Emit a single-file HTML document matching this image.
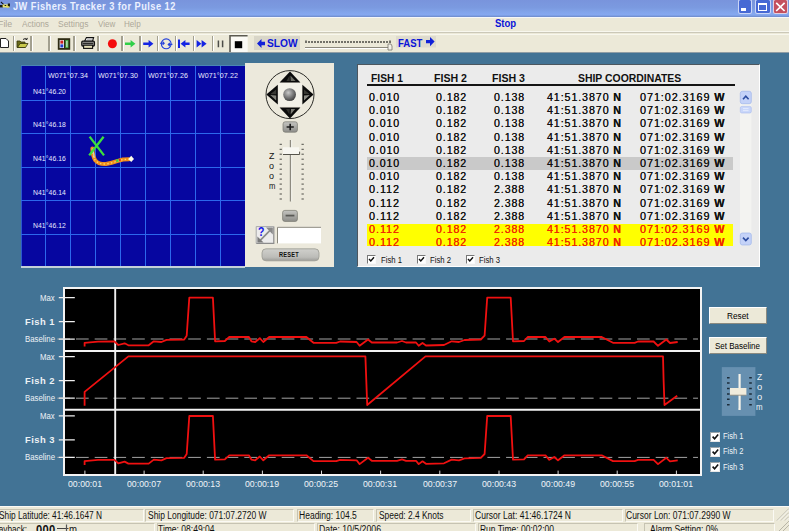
<!DOCTYPE html>
<html>
<head>
<meta charset="utf-8">
<title>JW Fishers Tracker 3 for Pulse 12</title>
<style>
html,body{margin:0;padding:0;}
body{width:789px;height:531px;overflow:hidden;position:relative;background:#427395;font-family:"Liberation Sans",sans-serif;font-size:11px;color:#000;}
.abs{position:absolute;}
.t{position:absolute;white-space:nowrap;line-height:1;}
#titlebar{left:0;top:0;width:789px;height:17px;background:linear-gradient(#7994dc 0%,#7b9ae0 45%,#82a4ea 70%,#85a8f0 86%,#7c9ce0 93%,#6b89c9 100%);}
#title{left:13.4px;top:2.1px;color:#ecf1ff;font-weight:bold;font-size:10px;letter-spacing:0.5px;}
.wb{position:absolute;top:-1px;height:15.4px;border:1px solid rgba(235,240,255,.8);border-radius:2.5px;box-sizing:border-box;}
#menubar{left:0;top:17px;width:789px;height:16px;background:#ece9d8;border-top:1px solid #f6f7f8;box-sizing:border-box;}
.menu{top:19.6px;color:#aca899;font-size:9.2px;}
#toolbar{left:0;top:31px;width:789px;height:21px;background:#ece9d8;border-top:1px solid #f8f7ee;box-sizing:border-box;}#tbline{left:0;top:32.3px;width:789px;height:1.2px;background:#cbc8b8;}#tbline2{left:0;top:33.5px;width:789px;height:1px;background:#f8f7ee;}
#tbshadow{left:0;top:52px;width:789px;height:1px;background:#8f9da5;}
.sep{position:absolute;top:36px;width:1.6px;height:15px;background:#a3a08f;border-right:1px solid #fff;}
.blue{color:#0a14d8;font-weight:bold;}
/* map */
#map{left:21px;top:65px;width:224px;height:202.6px;background:#0606a0;overflow:hidden;}
.vl{position:absolute;top:0;width:1.3px;height:203px;background:#2c68ec;}
.hl{position:absolute;left:0;height:1.3px;width:224px;background:#2c68ec;}
.ml{position:absolute;color:#e8ecff;font-size:7.5px;white-space:nowrap;line-height:1;letter-spacing:0.1px;}
#ctrl{left:245px;top:63.4px;width:88.7px;height:203.6px;background:#ece9dc;}
/* table */
#tbl{left:357px;top:64px;width:403px;height:203px;background:#ebebeb;box-sizing:border-box;border-top:1.8px solid #4c565e;border-left:1.8px solid #4c565e;border-right:1px solid #fff;border-bottom:1px solid #fff;}
.th{position:absolute;top:73.8px;font-weight:bold;font-size:10.3px;white-space:nowrap;line-height:1;color:#111;}
.row{position:absolute;left:367px;width:366px;height:13.2px;font-size:10.7px;line-height:13.2px;letter-spacing:0.9px;color:#111;white-space:nowrap;text-shadow:0 0 0.6px #222;}
.row span{position:absolute;top:0;}
.c1{left:2px}.c2{left:69px}.c3{left:127px}.c4{left:180px}.c5{left:273px}
.red{color:#f02800;text-shadow:0 0 0.6px #f02800;}
/* graph */
#graph{left:63px;top:287.3px;width:638.6px;height:188.5px;background:#000;box-sizing:border-box;border:2px solid #f4f4f4;}
.gl{position:absolute;color:#eef2f6;white-space:nowrap;line-height:1;text-align:right;}
.tm{position:absolute;top:478px;width:60px;text-align:center;color:#f0f4f8;font-size:11px;line-height:1;}
.btn{position:absolute;left:709px;width:58px;height:17px;background:#ece9d8;border:1px solid #fff;border-right-color:#8a8a80;border-bottom-color:#8a8a80;box-sizing:border-box;text-align:center;font-size:11px;line-height:15px;color:#000;}
.cb{position:absolute;width:10px;height:10px;background:#fff;border:1px solid #555;box-sizing:border-box;}
/* status */
#status{left:0;top:505.6px;width:789px;height:25.4px;background:#ece9d8;border-top:1.4px solid #fbfaf6;box-sizing:border-box;}
.sb{position:absolute;height:11.4px;border:1px solid #c6c3b2;border-right-color:#fbfaf4;border-bottom-color:#fbfaf4;box-sizing:border-box;}
.st{position:absolute;white-space:nowrap;line-height:1;font-size:10px;color:#111;}
</style>
</head>
<body>
<!-- TITLE BAR -->
<div id="titlebar" class="abs"></div>
<svg class="abs" style="left:0;top:0" width="12" height="10" viewBox="0 0 12 10"><path d="M0 5 H3 V7.4 H0 Z" fill="#1c1c10"/><path d="M1.2 1.6 L4.4 4.6 L3.4 5 L0.6 2.4 Z" fill="#141420"/><path d="M2.6 4.4 H8.2 V7.4 H2.6 Z" fill="#ece468"/><path d="M4.6 5 h1.6 v1 h-1.6 Z M7.8 3.6 H10 V6.8 H7.8 Z" fill="#1c1c10"/><path d="M6.6 6.2 H9.4 V7.6 H6.6 Z" fill="#e8dc50"/></svg>
<div id="title" class="t" style="transform-origin:0 0;transform:scaleX(0.9248)">JW Fishers Tracker 3 for Pulse 12</div>
<div class="wb" style="left:737.8px;width:14.6px;background:#4769d4;"><div class="abs" style="left:2px;top:8.2px;width:5.4px;height:2.6px;background:#fff"></div></div>
<div class="wb" style="left:755px;width:15.6px;background:#4769d4;"><div class="abs" style="left:2.2px;top:2.8px;width:9px;height:8px;border:1.2px solid #fff;border-top-width:2.4px;box-sizing:border-box"></div></div>
<div class="wb" style="left:773px;width:15.2px;background:#c4505e;"><svg class="abs" style="left:1.4px;top:2.4px" width="11" height="10" viewBox="0 0 11 10"><path d="M1.2 0.8 L9.6 9 M9.6 0.8 L1.2 9" stroke="#fff" stroke-width="1.7"/></svg></div>
<!-- MENU -->
<div id="menubar" class="abs"></div>
<div class="t menu" style="left:-2px;transform-origin:0 0;transform:scaleX(0.9586)">File</div>
<div class="t menu" style="left:22px;transform-origin:0 0;transform:scaleX(0.8958)">Actions</div>
<div class="t menu" style="left:58px;transform-origin:0 0;transform:scaleX(0.9186)">Settings</div>
<div class="t menu" style="left:98px;transform-origin:0 0;transform:scaleX(0.8759)">View</div>
<div class="t menu" style="left:124px;transform-origin:0 0;transform:scaleX(0.8833)">Help</div>
<div class="t blue" style="left:495.2px;top:19.2px;font-size:10.2px;transform-origin:0 0;transform:scaleX(0.9364)">Stop</div>
<!-- TOOLBAR -->
<div id="toolbar" class="abs"></div>
<div id="tbshadow" class="abs"></div><div id="tbline" class="abs"></div><div id="tbline2" class="abs"></div>
<div class="sep" style="left:12.6px"></div><div class="sep" style="left:30.2px"></div><div class="sep" style="left:48.2px"></div><div class="sep" style="left:73px"></div><div class="sep" style="left:97px"></div><div class="sep" style="left:121.3px"></div><div class="sep" style="left:139px"></div><div class="sep" style="left:156.6px"></div><div class="sep" style="left:174.6px"></div><div class="sep" style="left:192.7px"></div><div class="sep" style="left:211.6px"></div>
<svg class="abs" style="left:0;top:34px" width="440" height="18" viewBox="0 34 440 18">
<!-- new doc -->
<path d="M0.5 38.5 H6 L8.5 41 V47.5 H0.5 Z" fill="#fff" stroke="#222" stroke-width="1"/>
<!-- open folder -->
<path d="M17 47.5 V41 H20 L21 42 H25 V47.5 Z" fill="#6b6b1a" stroke="#33330a" stroke-width="0.8"/><path d="M17.5 47.5 L20 43.5 H28 L25.5 47.5 Z" fill="#c8c84a" stroke="#33330a" stroke-width="0.8"/><path d="M23 39.5 Q25.5 37.5 27 39.5 M27 39.5 l0.3 -1.6 M27 39.5 l-1.6 -0.2" stroke="#111" stroke-width="0.9" fill="none"/>
<!-- picture icon -->
<rect x="57.8" y="38.2" width="12.4" height="11.6" fill="#2e2c14"/><rect x="59.6" y="40" width="4.4" height="8" fill="#e8e8f0"/><rect x="60.4" y="40.6" width="2.8" height="3" fill="#d02020"/><rect x="60.4" y="44.4" width="2.8" height="3" fill="#2040d0"/><rect x="65.4" y="40" width="3" height="8" fill="#48b048"/><rect x="66.4" y="41" width="1" height="6" fill="#e8f0e8"/>
<!-- printer -->
<path d="M84.4 41.4 L86.4 37.6 H93.6 L92.4 41.4 Z" fill="#f8f8f8" stroke="#111" stroke-width="1.1"/><path d="M87 39.4 h5" stroke="#999" stroke-width="0.6"/><rect x="81.8" y="41.2" width="12.6" height="4.8" rx="1" fill="#9a9a96" stroke="#111" stroke-width="1.3"/><rect x="83.6" y="45.2" width="9" height="3.2" fill="#e4e0b8" stroke="#111" stroke-width="1.1"/><rect x="83" y="42.8" width="10" height="1.2" fill="#2a2a2a"/>
<!-- record -->
<circle cx="112.4" cy="43.8" r="4.5" fill="#f40c0c"/>
<!-- green arrow -->
<path d="M125 42.6 H130.6 V40 L135.4 43.8 L130.6 47.6 V45 H125 Z" fill="#30d048"/>
<!-- blue arrow -->
<path d="M143.2 42.6 H148.6 V40 L153.4 43.8 L148.6 47.6 V45 H143.2 Z" fill="#1424e4"/>
<!-- cycle -->
<circle cx="166.2" cy="43.8" r="4.9" fill="none" stroke="#2440dc" stroke-width="1.1"/><path d="M160 43.2 H163.6 M162.6 41.6 L164.2 43.2 L162.6 44.8 M172.4 44.4 H168.8 M169.8 42.8 L168.2 44.4 L169.8 46" stroke="#2440dc" stroke-width="1.1" fill="none"/>
<!-- |<- -->
<path d="M179 39.6 V48" stroke="#1424e4" stroke-width="2"/><path d="M189.6 42.6 H185.4 V40 L180.6 43.8 L185.4 47.6 V45 H189.6 Z" fill="#1424e4"/>
<!-- >> -->
<path d="M196.6 40 L201.4 43.8 L196.6 47.6 Z M201.6 40 L206.6 43.8 L201.6 47.6 Z" fill="#1424e4"/>
<!-- pause -->
<path d="M218.4 40.5 V47.3 M222.6 40.5 V47.3" stroke="#4c4c48" stroke-width="1.5"/>
<!-- stop (pressed) -->
<rect x="229.3" y="35" width="18.4" height="17" fill="#fbfaf5"/><path d="M230 52 V35.8 H247.6" stroke="#5c5a50" stroke-width="1.6" fill="none"/><rect x="234.8" y="41.2" width="7.4" height="7" fill="#000"/>
<!-- slow bg -->
<rect x="254" y="36" width="46" height="14" fill="#d9d6c8"/>
<path d="M257 43.5 L261.5 39 V41.8 H265 V45.2 H261.5 V48 Z" fill="#1020d8"/>
<!-- slider -->
<path d="M306 40.5 V43 M309 41 V43 M312 41 V43 M315 41 V43 M318 41 V43 M321 41 V43 M324 41 V43 M327 41 V43 M330 41 V43 M333 41 V43 M336 41 V43 M339 41 V43 M342 41 V43 M345 41 V43 M348 41 V43 M351 41 V43 M354 41 V43 M357 41 V43 M360 41 V43 M363 41 V43 M366 41 V43 M369 41 V43 M372 41 V43 M375 41 V43 M378 41 V43 M381 41 V43 M384 41 V43 M387 41 V43 M390 40.5 V43" stroke="#2a2a26" stroke-width="1.25"/>
<path d="M305 47.5 H388" stroke="#8c897c" stroke-width="1"/><path d="M305 48.5 H388" stroke="#fff" stroke-width="1"/>
<path d="M388 44 H391 L392 46 V50 H388 Z" fill="#f4f2ea" stroke="#77746a" stroke-width="0.8"/>
<!-- fast arrow -->
<rect x="396" y="36" width="40" height="11.5" fill="#dedbce"/><path d="M434.6 41.6 L430 37 V39.9 H426 V43.3 H430 V46.2 Z" fill="#1020d8"/>
</svg>
<div class="t blue" style="left:267px;top:38.2px;font-size:10.6px;transform-origin:0 0;transform:scaleX(0.9628)">SLOW</div>
<div class="t blue" style="left:397.8px;top:37.6px;font-size:10.8px;transform-origin:0 0;transform:scaleX(0.8843)">FAST</div>
<!-- MAP -->
<div id="map" class="abs">
<div class="vl" style="left:0;background:#2a58d0"></div><div class="vl" style="left:23.8px"></div><div class="vl" style="left:48.8px"></div><div class="vl" style="left:73.8px"></div><div class="vl" style="left:98.9px"></div><div class="vl" style="left:123.9px"></div><div class="vl" style="left:149.0px"></div><div class="vl" style="left:174.0px"></div><div class="vl" style="left:199.1px"></div>
<div class="hl" style="top:-0.4px;height:1.4px;background:#4a86b4"></div><div class="hl" style="top:201.3px;height:1.3px;background:#c4d0d8"></div><div class="hl" style="top:34.6px"></div><div class="hl" style="top:68.1px"></div><div class="hl" style="top:101.6px"></div><div class="hl" style="top:135.1px"></div><div class="hl" style="top:168.6px"></div>
<div class="ml" style="left:26.5px;top:7px;transform-origin:0 0;transform:scaleX(0.9440)">W071°07.34</div><div class="ml" style="left:76.6px;top:7px;transform-origin:0 0;transform:scaleX(0.9440)">W071°07.30</div><div class="ml" style="left:126.7px;top:7px;transform-origin:0 0;transform:scaleX(0.9440)">W071°07.26</div><div class="ml" style="left:176.8px;top:7px;transform-origin:0 0;transform:scaleX(0.9440)">W071°07.22</div><div class="ml" style="left:11.5px;top:22.7px;transform-origin:0 0;transform:scaleX(0.9057)">N41°46.20</div><div class="ml" style="left:11.5px;top:56.3px;transform-origin:0 0;transform:scaleX(0.9057)">N41°46.18</div><div class="ml" style="left:11.5px;top:89.9px;transform-origin:0 0;transform:scaleX(0.9057)">N41°46.16</div><div class="ml" style="left:11.5px;top:123.5px;transform-origin:0 0;transform:scaleX(0.9057)">N41°46.14</div><div class="ml" style="left:11.5px;top:157.1px;transform-origin:0 0;transform:scaleX(0.9057)">N41°46.12</div>
<svg class="abs" style="left:0;top:0" width="224" height="203" viewBox="21 65 224 203">
<path d="M92.4 148.5 Q92.6 156 95.2 160.2 Q99 164.6 106 164 Q112 163 117 161.2 L123 159.5 L129 159.3" stroke="#f08c1c" stroke-width="4" fill="none" stroke-linecap="round" stroke-linejoin="round"/>
<path d="M92.4 148.5 Q92.6 156 95.2 160.2 Q99 164.6 106 164 Q112 163 117 161.2 L123 159.5 L129 159.3" stroke="#f8d868" stroke-width="1.4" fill="none" stroke-dasharray="1.4 2.2"/>
<path d="M93.2 151 L94.2 158" stroke="#d8d0c0" stroke-width="1.2"/>
<rect x="116.2" y="159.2" width="2.4" height="2.6" fill="#40d040"/><rect x="119" y="159" width="1.6" height="2" fill="#e82020"/>
<path d="M89.6 136.6 L104 155.4 M103.6 136.8 L89.2 155.4" stroke="#3ce03c" stroke-width="2.3" fill="none"/>
<path d="M131.2 155.8 L134 158.9 L131.2 162 L128.4 158.9 Z" fill="#fffde8"/>
</svg>
</div>
<div id="ctrl" class="abs"></div>
<svg class="abs" style="left:245px;top:64px" width="88" height="203" viewBox="245 64 88 203">
<defs>
<radialGradient id="ball" cx="0.4" cy="0.35" r="0.7"><stop offset="0" stop-color="#c8c8c8"/><stop offset="0.5" stop-color="#808080"/><stop offset="1" stop-color="#3a3a3a"/></radialGradient>
<linearGradient id="bt" x1="0" y1="0" x2="0" y2="1"><stop offset="0" stop-color="#c4c4c0"/><stop offset="1" stop-color="#8e8e8a"/></linearGradient><linearGradient id="rs" x1="0" y1="0" x2="0" y2="1"><stop offset="0" stop-color="#d0d0cc"/><stop offset="0.7" stop-color="#bcbcb8"/><stop offset="1" stop-color="#9c9c98"/></linearGradient>
</defs>
<circle cx="290" cy="94.6" r="24" fill="none" stroke="#2c2c28" stroke-width="1"/>
<rect x="278.4" y="83" width="23.4" height="23.6" fill="#f3f1e8"/>
<path d="M290 71.6 L300.4 82.6 H279.6 Z" fill="#0a0a0a"/><path d="M290.4 75.4 L295.6 81 H290.8 Z" fill="#6e6e66"/><path d="M289.6 75.6 L289.8 81 H286.4 Z" fill="#34342f"/>
<path d="M290 118.4 L300.4 107.4 H279.6 Z" fill="#0a0a0a"/><path d="M290.6 114.6 L295.2 109 H291 Z" fill="#7c7c74"/><path d="M289.4 114.4 L289.8 109 H286 Z" fill="#30302c"/>
<path d="M266.3 94.6 L277.8 84.8 V104.6 Z" fill="#0a0a0a"/><path d="M270.2 95 L276.2 95.4 V100.4 Z" fill="#82827a"/><path d="M270.2 94.2 L276.2 94.2 V89.4 Z" fill="#3a3a35"/>
<path d="M313.6 94.6 L302.4 84.8 V104.6 Z" fill="#0a0a0a"/><path d="M309.8 95 L304 95.6 V100.6 Z" fill="#8c8c84"/><path d="M309.8 94.2 L304 94 V89.4 Z" fill="#383833"/>
<circle cx="289.6" cy="94.6" r="6.4" fill="url(#ball)"/>
<!-- plus -->
<rect x="283" y="121.8" width="14.4" height="10.4" rx="2.2" fill="url(#bt)" stroke="#77776f" stroke-width="0.7"/><path d="M286.6 127 H293.8 M290.2 123.8 V130.2" stroke="#1c1c1c" stroke-width="1.6"/>
<!-- slider -->
<path d="M290.5 140 V201.5" stroke="#8e8b80" stroke-width="1.4"/><path d="M291.7 140 V201.5" stroke="#fbfbf6" stroke-width="0.8"/>
<path d="M279.6 144.3 h2.3 M301.5 144.3 h2.3 M279.6 149.3 h2.3 M301.5 149.3 h2.3 M279.6 154.2 h2.3 M301.5 154.2 h2.3 M279.6 159.2 h2.3 M301.5 159.2 h2.3 M279.6 164.2 h2.3 M301.5 164.2 h2.3 M279.6 169.2 h2.3 M301.5 169.2 h2.3 M279.6 174.1 h2.3 M301.5 174.1 h2.3 M279.6 179.1 h2.3 M301.5 179.1 h2.3 M279.6 184.1 h2.3 M301.5 184.1 h2.3 M279.6 189.0 h2.3 M301.5 189.0 h2.3 M279.6 194.0 h2.3 M301.5 194.0 h2.3 M279.6 199.0 h2.3 M301.5 199.0 h2.3" stroke="#46463f" stroke-width="0.95"/>
<path d="M283 147.2 H299.2 V150 L300.8 151 L299.2 152 V154.4 H283 Z" fill="#f8f7f1"/><path d="M283 154.5 H299.6 V151.6" stroke="#55534a" stroke-width="1" fill="none"/>
<!-- minus -->
<rect x="282.6" y="210.4" width="14.8" height="11" rx="2.2" fill="url(#bt)" stroke="#77776f" stroke-width="0.7"/><path d="M285.6 215.6 H294.4" stroke="#5a5a56" stroke-width="1.8"/>
<!-- help icon -->
<rect x="256.2" y="226.6" width="17.6" height="16.8" fill="#ececec"/><path d="M256.2 243.4 H273.8 V226.6" stroke="#8c8c8c" stroke-width="1.2" fill="none"/><path d="M256.2 243.4 V226.6 H273.8" stroke="#a8a8a8" stroke-width="1" fill="none"/>
<path d="M259 241.6 L272 228.4" stroke="#8a8a8a" stroke-width="1.6"/><path d="M272.8 227.6 V234.5 L266 227.6 Z" fill="#8a8a8a"/><path d="M257.4 242.6 V236.4 L263.6 242.6 Z" fill="#7a7a7a"/>
<!-- input -->
<rect x="277" y="226.8" width="44" height="16.6" fill="#fff"/><path d="M277.5 243.4 V227.3 H321" stroke="#8a887c" stroke-width="1" fill="none"/>
<!-- reset -->
<rect x="262" y="248.8" width="57" height="12" rx="4" fill="url(#rs)" stroke="#9a9a92" stroke-width="0.8"/>
</svg>
<div class="t" style="left:257.6px;top:226px;font-size:12px;font-weight:bold;color:#1414e8;transform-origin:0 0;transform:scaleX(0.8715)">?</div>
<div class="t" style="left:268.8px;top:151px;font-size:9.5px;color:#111;transform-origin:0 0;transform:scaleX(0.9290)">Z</div>
<div class="t" style="left:269px;top:160.7px;font-size:9.5px;color:#111;transform-origin:0 0;transform:scaleX(0.9440)">o</div>
<div class="t" style="left:269px;top:170.9px;font-size:9.5px;color:#111;transform-origin:0 0;transform:scaleX(0.9440)">o</div>
<div class="t" style="left:268.5px;top:181px;font-size:9.5px;color:#111;transform-origin:0 0;transform:scaleX(0.8079)">m</div>
<div class="t" style="left:279.1px;top:250.6px;font-size:8px;font-weight:bold;color:#111;letter-spacing:0.3px;transform-origin:0 0;transform:scaleX(0.7028)">RESET</div>
<!-- TABLE -->
<div id="tbl" class="abs"></div>
<div class="th" style="left:370.7px;transform-origin:0 0;transform:scaleX(0.9985)">FISH 1</div><div class="th" style="left:434px;transform-origin:0 0;transform:scaleX(1.0297)">FISH 2</div><div class="th" style="left:492px;transform-origin:0 0;transform:scaleX(1.0297)">FISH 3</div><div class="th" style="left:577.5px;transform-origin:0 0;transform:scaleX(1.0115)">SHIP COORDINATES</div>
<div class="abs" style="left:367px;top:83.9px;width:368px;height:2.3px;background:#141414"></div>
<div class="abs" style="left:367px;top:157.2px;width:366px;height:12.8px;background:#c9c9c9"></div>
<div class="abs" style="left:367px;top:223.6px;width:366px;height:22px;background:#ffff00"></div>
<div class="abs" style="left:367px;top:91px;width:366px;height:154.6px;overflow:hidden">
<div class="row" style="left:0;top:0.0px"><span class="c1" style="transform-origin:0 0;transform:scaleX(0.9920)">0.010</span><span class="c2" style="transform-origin:0 0;transform:scaleX(0.9920)">0.182</span><span class="c3" style="transform-origin:0 0;transform:scaleX(0.9920)">0.138</span><span class="c4" style="transform-origin:0 0;transform:scaleX(1.0002)">41:51.3870 <b>N</b></span><span class="c5" style="transform-origin:0 0;transform:scaleX(1.0154)">071:02.3169 <b>W</b></span></div>
<div class="row" style="left:0;top:13.2px"><span class="c1" style="transform-origin:0 0;transform:scaleX(0.9920)">0.010</span><span class="c2" style="transform-origin:0 0;transform:scaleX(0.9920)">0.182</span><span class="c3" style="transform-origin:0 0;transform:scaleX(0.9920)">0.138</span><span class="c4" style="transform-origin:0 0;transform:scaleX(1.0002)">41:51.3870 <b>N</b></span><span class="c5" style="transform-origin:0 0;transform:scaleX(1.0154)">071:02.3169 <b>W</b></span></div>
<div class="row" style="left:0;top:26.4px"><span class="c1" style="transform-origin:0 0;transform:scaleX(0.9920)">0.010</span><span class="c2" style="transform-origin:0 0;transform:scaleX(0.9920)">0.182</span><span class="c3" style="transform-origin:0 0;transform:scaleX(0.9920)">0.138</span><span class="c4" style="transform-origin:0 0;transform:scaleX(1.0002)">41:51.3870 <b>N</b></span><span class="c5" style="transform-origin:0 0;transform:scaleX(1.0154)">071:02.3169 <b>W</b></span></div>
<div class="row" style="left:0;top:39.6px"><span class="c1" style="transform-origin:0 0;transform:scaleX(0.9920)">0.010</span><span class="c2" style="transform-origin:0 0;transform:scaleX(0.9920)">0.182</span><span class="c3" style="transform-origin:0 0;transform:scaleX(0.9920)">0.138</span><span class="c4" style="transform-origin:0 0;transform:scaleX(1.0002)">41:51.3870 <b>N</b></span><span class="c5" style="transform-origin:0 0;transform:scaleX(1.0154)">071:02.3169 <b>W</b></span></div>
<div class="row" style="left:0;top:52.8px"><span class="c1" style="transform-origin:0 0;transform:scaleX(0.9920)">0.010</span><span class="c2" style="transform-origin:0 0;transform:scaleX(0.9920)">0.182</span><span class="c3" style="transform-origin:0 0;transform:scaleX(0.9920)">0.138</span><span class="c4" style="transform-origin:0 0;transform:scaleX(1.0002)">41:51.3870 <b>N</b></span><span class="c5" style="transform-origin:0 0;transform:scaleX(1.0154)">071:02.3169 <b>W</b></span></div>
<div class="row" style="left:0;top:66.0px"><span class="c1" style="transform-origin:0 0;transform:scaleX(0.9920)">0.010</span><span class="c2" style="transform-origin:0 0;transform:scaleX(0.9920)">0.182</span><span class="c3" style="transform-origin:0 0;transform:scaleX(0.9920)">0.138</span><span class="c4" style="transform-origin:0 0;transform:scaleX(1.0002)">41:51.3870 <b>N</b></span><span class="c5" style="transform-origin:0 0;transform:scaleX(1.0154)">071:02.3169 <b>W</b></span></div>
<div class="row" style="left:0;top:79.2px"><span class="c1" style="transform-origin:0 0;transform:scaleX(0.9920)">0.010</span><span class="c2" style="transform-origin:0 0;transform:scaleX(0.9920)">0.182</span><span class="c3" style="transform-origin:0 0;transform:scaleX(0.9920)">0.138</span><span class="c4" style="transform-origin:0 0;transform:scaleX(1.0002)">41:51.3870 <b>N</b></span><span class="c5" style="transform-origin:0 0;transform:scaleX(1.0154)">071:02.3169 <b>W</b></span></div>
<div class="row" style="left:0;top:92.4px"><span class="c1" style="transform-origin:0 0;transform:scaleX(1.0180)">0.112</span><span class="c2" style="transform-origin:0 0;transform:scaleX(0.9920)">0.182</span><span class="c3" style="transform-origin:0 0;transform:scaleX(0.9920)">2.388</span><span class="c4" style="transform-origin:0 0;transform:scaleX(1.0002)">41:51.3870 <b>N</b></span><span class="c5" style="transform-origin:0 0;transform:scaleX(1.0154)">071:02.3169 <b>W</b></span></div>
<div class="row" style="left:0;top:105.6px"><span class="c1" style="transform-origin:0 0;transform:scaleX(1.0180)">0.112</span><span class="c2" style="transform-origin:0 0;transform:scaleX(0.9920)">0.182</span><span class="c3" style="transform-origin:0 0;transform:scaleX(0.9920)">2.388</span><span class="c4" style="transform-origin:0 0;transform:scaleX(1.0002)">41:51.3870 <b>N</b></span><span class="c5" style="transform-origin:0 0;transform:scaleX(1.0154)">071:02.3169 <b>W</b></span></div>
<div class="row" style="left:0;top:118.8px"><span class="c1" style="transform-origin:0 0;transform:scaleX(1.0180)">0.112</span><span class="c2" style="transform-origin:0 0;transform:scaleX(0.9920)">0.182</span><span class="c3" style="transform-origin:0 0;transform:scaleX(0.9920)">2.388</span><span class="c4" style="transform-origin:0 0;transform:scaleX(1.0002)">41:51.3870 <b>N</b></span><span class="c5" style="transform-origin:0 0;transform:scaleX(1.0154)">071:02.3169 <b>W</b></span></div>
<div class="row red" style="left:0;top:132.0px"><span class="c1" style="transform-origin:0 0;transform:scaleX(1.0180)">0.112</span><span class="c2" style="transform-origin:0 0;transform:scaleX(0.9920)">0.182</span><span class="c3" style="transform-origin:0 0;transform:scaleX(0.9920)">2.388</span><span class="c4" style="transform-origin:0 0;transform:scaleX(1.0002)">41:51.3870 <b>N</b></span><span class="c5" style="transform-origin:0 0;transform:scaleX(1.0154)">071:02.3169 <b>W</b></span></div>
<div class="row red" style="left:0;top:145.2px"><span class="c1" style="transform-origin:0 0;transform:scaleX(1.0180)">0.112</span><span class="c2" style="transform-origin:0 0;transform:scaleX(0.9920)">0.182</span><span class="c3" style="transform-origin:0 0;transform:scaleX(0.9920)">2.388</span><span class="c4" style="transform-origin:0 0;transform:scaleX(1.0002)">41:51.3870 <b>N</b></span><span class="c5" style="transform-origin:0 0;transform:scaleX(1.0154)">071:02.3169 <b>W</b></span></div>
</div>
<svg class="abs" style="left:739px;top:90px" width="14" height="160" viewBox="739 90 14 160">
<rect x="740" y="91" width="11.4" height="154.4" fill="#f3f3f1"/>
<rect x="740.3" y="91.3" width="11" height="12.4" rx="2" fill="#c4d2f8" stroke="#9fb4ea" stroke-width="0.7"/><path d="M743 99.2 L745.8 96.2 L748.6 99.2" stroke="#2c4ca0" stroke-width="1.6" fill="none"/>
<rect x="740.3" y="106.4" width="11" height="6.6" rx="1.5" fill="#c8d6fa" stroke="#a8baec" stroke-width="0.6"/><path d="M743 108.6 h5.6 M743 110.6 h5.6" stroke="#e8eefc" stroke-width="0.8"/>
<rect x="740.3" y="233" width="11" height="12" rx="2" fill="#c4d2f8" stroke="#9fb4ea" stroke-width="0.7"/><path d="M743 237.6 L745.8 240.6 L748.6 237.6" stroke="#2c4ca0" stroke-width="1.6" fill="none"/>
</svg>
<div class="cb" style="left:367.4px;top:255.1px;width:8.8px;height:8.8px;border-color:#777 #fafafa #fafafa #777"><svg class="abs" style="left:0;top:0" width="7" height="7" viewBox="0 0 7 7"><path d="M1 3 L2.8 5 L6 1.2" stroke="#111" stroke-width="1.4" fill="none"/></svg></div><div class="t" style="left:380.7px;top:255.6px;font-size:9px;color:#111;transform-origin:0 0;transform:scaleX(0.8566)">Fish 1</div>
<div class="cb" style="left:416.8px;top:255.1px;width:8.8px;height:8.8px;border-color:#777 #fafafa #fafafa #777"><svg class="abs" style="left:0;top:0" width="7" height="7" viewBox="0 0 7 7"><path d="M1 3 L2.8 5 L6 1.2" stroke="#111" stroke-width="1.4" fill="none"/></svg></div><div class="t" style="left:429.5px;top:255.6px;font-size:9px;color:#111;transform-origin:0 0;transform:scaleX(0.8566)">Fish 2</div>
<div class="cb" style="left:465.8px;top:255.1px;width:8.8px;height:8.8px;border-color:#777 #fafafa #fafafa #777"><svg class="abs" style="left:0;top:0" width="7" height="7" viewBox="0 0 7 7"><path d="M1 3 L2.8 5 L6 1.2" stroke="#111" stroke-width="1.4" fill="none"/></svg></div><div class="t" style="left:478.6px;top:255.6px;font-size:9px;color:#111;transform-origin:0 0;transform:scaleX(0.8566)">Fish 3</div>
<!-- GRAPH -->
<div id="graph" class="abs"></div>
<svg class="abs" style="left:55px;top:285px" width="650" height="195" viewBox="55 285 650 195">
<path d="M57.3 339.0 H698" stroke="#a4a4a4" stroke-width="1" stroke-dasharray="12.7 6" fill="none"/>
<path d="M57.3 398.2 H698" stroke="#a4a4a4" stroke-width="1" stroke-dasharray="12.7 6" fill="none"/>
<path d="M57.3 457.4 H698" stroke="#a4a4a4" stroke-width="1" stroke-dasharray="12.7 6" fill="none"/>
<path d="M63 351 H701 M63 409.8 H701" stroke="#f2f2f2" stroke-width="2"/>
<path d="M58.8 297.6 H74.8 M58.8 321.6 H74.8 M58.8 339.1 H74.8 M58.8 356.6 H74.8 M58.8 380.6 H74.8 M58.8 398.1 H74.8 M58.8 415.8 H74.8 M58.8 439.8 H74.8 M58.8 457.3 H74.8 " stroke="#f0f0f0" stroke-width="1.3"/>
<path d="M84.9 470.6 V474 M144.1 470.6 V474 M203.2 470.6 V474 M262.4 470.6 V474 M321.5 470.6 V474 M380.6 470.6 V474 M439.8 470.6 V474 M499.0 470.6 V474 M558.1 470.6 V474 M617.2 470.6 V474 M676.4 470.6 V474 " stroke="#d8d8d8" stroke-width="1"/>
<path d="M115.2 289 V474" stroke="#f0f0f0" stroke-width="1.9"/>
<path d="M84.6 346.6 L84.6 342.8 L98.0 341.6 L114.5 341.5 L118.3 345.0 L124.6 343.3 L128.4 345.3 L148.7 345.3 L153.8 341.3 L161.4 342.0 L166.5 339.8 L184.2 339.5 L186.7 335.7 L189.3 297.7 L212.9 297.7 L215.1 341.3 L224.8 341.0 L229.3 337.0 L248.9 337.0 L251.4 341.3 L255.2 342.0 L259.8 338.2 L263.3 342.0 L269.2 337.0 L306.4 337.0 L313.5 342.8 L336.3 342.8 L340.0 341.5 L356.6 342.0 L359.6 345.8 L368.0 339.5 L371.8 342.5 L397.0 342.5 L402.0 341.0 L406.0 342.5 L416.0 342.5 L418.7 345.8 L422.5 343.0 L426.0 345.5 L444.0 345.0 L451.7 341.3 L459.0 342.0 L464.5 340.0 L480.8 339.5 L484.6 335.7 L487.2 297.7 L510.7 297.7 L513.0 341.3 L524.0 341.0 L527.7 337.0 L545.5 337.0 L549.3 341.5 L554.3 338.7 L558.0 342.0 L564.5 337.0 L601.7 337.0 L613.0 342.8 L634.6 342.8 L638.0 341.5 L653.6 341.5 L658.0 345.8 L666.3 339.5 L670.0 343.0 L677.7 342.0" stroke="#f01010" stroke-width="1.8" fill="none" stroke-linejoin="round"/>
<path d="M84.6 405.8 L84.6 391.9 L128.4 356.4 L365.4 356.4 L367.2 405.0 L425.5 356.4 L663.0 356.4 L663.6 380.0 L664.5 405.0 L677.2 395.7" stroke="#f01010" stroke-width="1.8" fill="none" stroke-linejoin="round"/>
<path d="M84.6 346.6 L84.6 342.8 L98.0 341.6 L114.5 341.5 L118.3 345.0 L124.6 343.3 L128.4 345.3 L148.7 345.3 L153.8 341.3 L161.4 342.0 L166.5 339.8 L184.2 339.5 L186.7 335.7 L189.3 297.7 L212.9 297.7 L215.1 341.3 L224.8 341.0 L229.3 337.0 L248.9 337.0 L251.4 341.3 L255.2 342.0 L259.8 338.2 L263.3 342.0 L269.2 337.0 L306.4 337.0 L313.5 342.8 L336.3 342.8 L340.0 341.5 L356.6 342.0 L359.6 345.8 L368.0 339.5 L371.8 342.5 L397.0 342.5 L402.0 341.0 L406.0 342.5 L416.0 342.5 L418.7 345.8 L422.5 343.0 L426.0 345.5 L444.0 345.0 L451.7 341.3 L459.0 342.0 L464.5 340.0 L480.8 339.5 L484.6 335.7 L487.2 297.7 L510.7 297.7 L513.0 341.3 L524.0 341.0 L527.7 337.0 L545.5 337.0 L549.3 341.5 L554.3 338.7 L558.0 342.0 L564.5 337.0 L601.7 337.0 L613.0 342.8 L634.6 342.8 L638.0 341.5 L653.6 341.5 L658.0 345.8 L666.3 339.5 L670.0 343.0 L677.7 342.0" transform="translate(0,118.3)" stroke="#f01010" stroke-width="1.8" fill="none" stroke-linejoin="round"/>
</svg>
<div class="gl" style="left:39.8px;top:293.5px;font-size:9px;transform-origin:0 0;transform:scaleX(0.8639)">Max</div><div class="gl" style="left:24.6px;top:317.1px;font-size:9.8px;font-weight:bold;letter-spacing:0.5px;transform-origin:0 0;transform:scaleX(0.9581)">Fish 1</div><div class="gl" style="left:24.6px;top:334.5px;font-size:9.2px;transform-origin:0 0;transform:scaleX(0.8511)">Baseline</div>
<div class="gl" style="left:39.8px;top:352.5px;font-size:9px;transform-origin:0 0;transform:scaleX(0.8639)">Max</div><div class="gl" style="left:24.6px;top:376.2px;font-size:9.8px;font-weight:bold;letter-spacing:0.5px;transform-origin:0 0;transform:scaleX(0.9581)">Fish 2</div><div class="gl" style="left:24.6px;top:393.6px;font-size:9.2px;transform-origin:0 0;transform:scaleX(0.8511)">Baseline</div>
<div class="gl" style="left:39.8px;top:411.7px;font-size:9px;transform-origin:0 0;transform:scaleX(0.8639)">Max</div><div class="gl" style="left:24.6px;top:435.2px;font-size:9.8px;font-weight:bold;letter-spacing:0.5px;transform-origin:0 0;transform:scaleX(0.9581)">Fish 3</div><div class="gl" style="left:24.6px;top:452.8px;font-size:9.2px;transform-origin:0 0;transform:scaleX(0.8511)">Baseline</div>
<div class="t" style="left:67.6px;top:478.9px;font-size:9.8px;color:#f0f4f8;transform-origin:0 0;transform:scaleX(0.8914)">00:00:01</div><div class="t" style="left:126.7px;top:478.9px;font-size:9.8px;color:#f0f4f8;transform-origin:0 0;transform:scaleX(0.8914)">00:00:07</div><div class="t" style="left:185.9px;top:478.9px;font-size:9.8px;color:#f0f4f8;transform-origin:0 0;transform:scaleX(0.8914)">00:00:13</div><div class="t" style="left:245.1px;top:478.9px;font-size:9.8px;color:#f0f4f8;transform-origin:0 0;transform:scaleX(0.8914)">00:00:19</div><div class="t" style="left:304.2px;top:478.9px;font-size:9.8px;color:#f0f4f8;transform-origin:0 0;transform:scaleX(0.8914)">00:00:25</div><div class="t" style="left:363.4px;top:478.9px;font-size:9.8px;color:#f0f4f8;transform-origin:0 0;transform:scaleX(0.8914)">00:00:31</div><div class="t" style="left:422.5px;top:478.9px;font-size:9.8px;color:#f0f4f8;transform-origin:0 0;transform:scaleX(0.8914)">00:00:37</div><div class="t" style="left:481.7px;top:478.9px;font-size:9.8px;color:#f0f4f8;transform-origin:0 0;transform:scaleX(0.8914)">00:00:43</div><div class="t" style="left:540.8px;top:478.9px;font-size:9.8px;color:#f0f4f8;transform-origin:0 0;transform:scaleX(0.8914)">00:00:49</div><div class="t" style="left:599.9px;top:478.9px;font-size:9.8px;color:#f0f4f8;transform-origin:0 0;transform:scaleX(0.8914)">00:00:55</div><div class="t" style="left:659.1px;top:478.9px;font-size:9.8px;color:#f0f4f8;transform-origin:0 0;transform:scaleX(0.8914)">00:01:01</div>
<div class="btn" style="top:307px"><span class="t" style="left:16.8px;top:2.6px;font-size:9.6px;transform-origin:0 0;transform:scaleX(0.8579)">Reset</span></div>
<div class="btn" style="top:337px"><span class="t" style="left:4.8px;top:2.6px;font-size:9.6px;transform-origin:0 0;transform:scaleX(0.8353)">Set Baseline</span></div>
<svg class="abs" style="left:720px;top:365px" width="50" height="55" viewBox="720 365 50 55">
<rect x="721.8" y="367.1" width="33.6" height="48.8" fill="#6790b0"/>
<path d="M739.6 374 V409 H738.4" stroke="#f6f3ea" stroke-width="2.2" fill="none"/>
<path d="M727 377.7 h2.6 M727 383.1 h2.6 M727 388.5 h2.6 M727 393.9 h2.6 M727 399.3 h2.6 M727 404.7 h2.6 M749.2 377.7 h2.6 M749.2 383.1 h2.6 M749.2 388.5 h2.6 M749.2 393.9 h2.6 M749.2 399.3 h2.6 M749.2 404.7 h2.6" stroke="#1c2c3a" stroke-width="1.5"/>
<rect x="730" y="388" width="16.4" height="7.2" fill="#f1ecdc"/><path d="M730 395.2 H746.4" stroke="#8a8778" stroke-width="0.8"/>
</svg>
<div class="t" style="left:757.0px;top:372.2px;font-size:9.5px;color:#f0f4f8;transform-origin:0 0;transform:scaleX(0.8946)">Z</div><div class="t" style="left:757.0px;top:381.7px;font-size:9.5px;color:#f0f4f8;transform-origin:0 0;transform:scaleX(0.9817)">o</div><div class="t" style="left:757.0px;top:391.9px;font-size:9.5px;color:#f0f4f8;transform-origin:0 0;transform:scaleX(0.9817)">o</div><div class="t" style="left:756.2px;top:401.9px;font-size:9.5px;color:#f0f4f8;transform-origin:0 0;transform:scaleX(0.8331)">m</div>
<div class="cb" style="left:709.6px;top:432.0px;width:10.1px;height:9.8px;border-color:#9aa4aa #e8e8e8 #e8e8e8 #9aa4aa"><svg class="abs" style="left:0;top:0" width="9" height="8" viewBox="0 0 9 8"><path d="M1.6 3.6 L3.6 5.8 L7.2 1.6" stroke="#111" stroke-width="1.6" fill="none"/></svg></div><div class="t" style="left:723.1px;top:432.4px;font-size:9.2px;color:#f0f4f8;transform-origin:0 0;transform:scaleX(0.8150)">Fish 1</div>
<div class="cb" style="left:709.6px;top:447.0px;width:10.1px;height:9.8px;border-color:#9aa4aa #e8e8e8 #e8e8e8 #9aa4aa"><svg class="abs" style="left:0;top:0" width="9" height="8" viewBox="0 0 9 8"><path d="M1.6 3.6 L3.6 5.8 L7.2 1.6" stroke="#111" stroke-width="1.6" fill="none"/></svg></div><div class="t" style="left:723.1px;top:447.4px;font-size:9.2px;color:#f0f4f8;transform-origin:0 0;transform:scaleX(0.8150)">Fish 2</div>
<div class="cb" style="left:709.6px;top:462.4px;width:10.1px;height:9.8px;border-color:#9aa4aa #e8e8e8 #e8e8e8 #9aa4aa"><svg class="abs" style="left:0;top:0" width="9" height="8" viewBox="0 0 9 8"><path d="M1.6 3.6 L3.6 5.8 L7.2 1.6" stroke="#111" stroke-width="1.6" fill="none"/></svg></div><div class="t" style="left:723.1px;top:462.8px;font-size:9.2px;color:#f0f4f8;transform-origin:0 0;transform:scaleX(0.8150)">Fish 3</div>
<!-- STATUS -->
<div id="status" class="abs"></div>
<div class="sb" style="left:-2.0px;top:508.6px;height:13px;width:145.5px"></div><div class="st" style="left:-1.0px;top:511px;transform-origin:0 0;transform:scaleX(0.8307)">Ship Latitude: 41:46.1647 N</div>
<div class="sb" style="left:145.4px;top:508.6px;height:13px;width:148.9px"></div><div class="st" style="left:147.8px;top:511px;transform-origin:0 0;transform:scaleX(0.8458)">Ship Longitude: 071:07.2720 W</div>
<div class="sb" style="left:296.7px;top:508.6px;height:13px;width:77.0px"></div><div class="st" style="left:298.7px;top:511px;transform-origin:0 0;transform:scaleX(0.8520)">Heading: 104.5</div>
<div class="sb" style="left:376.0px;top:508.6px;height:13px;width:95.0px"></div><div class="st" style="left:378.6px;top:511px;transform-origin:0 0;transform:scaleX(0.8406)">Speed: 2.4 Knots</div>
<div class="sb" style="left:472.7px;top:508.6px;height:13px;width:150.3px"></div><div class="st" style="left:475.0px;top:511px;transform-origin:0 0;transform:scaleX(0.8549)">Cursor Lat: 41:46.1724 N</div>
<div class="sb" style="left:624.5px;top:508.6px;height:13px;width:149.9px"></div><div class="st" style="left:626.0px;top:511px;transform-origin:0 0;transform:scaleX(0.8506)">Cursor Lon: 071:07.2990 W</div>
<div class="sb" style="left:-2.0px;top:522.6px;height:12px;width:157.0px"></div><div class="sb" style="left:156.7px;top:522.6px;height:12px;width:158.3px"></div><div class="st" style="left:158.4px;top:525.2px;transform-origin:0 0;transform:scaleX(0.8516)">Time: 08:49:04</div>
<div class="sb" style="left:316.5px;top:522.6px;height:12px;width:159.5px"></div><div class="st" style="left:319.0px;top:525.2px;transform-origin:0 0;transform:scaleX(0.8711)">Date: 10/5/2006</div>
<div class="sb" style="left:477.8px;top:522.6px;height:12px;width:160.5px"></div><div class="st" style="left:479.5px;top:525.2px;transform-origin:0 0;transform:scaleX(0.8478)">Run Time: 00:02:00</div>
<div class="sb" style="left:643.6px;top:522.6px;height:12px;width:131.4px"></div><div class="st" style="left:649.6px;top:525.2px;transform-origin:0 0;transform:scaleX(0.8495)">Alarm Setting: 0%</div>
<div class="st" style="left:-3px;top:525.2px;transform-origin:0 0;transform:scaleX(0.8177)">layback:</div><div class="st" style="left:35.5px;top:524px;font-size:12.5px;font-weight:bold;letter-spacing:0.3px;transform-origin:0 0;transform:scaleX(0.8959)">000</div><div class="st" style="left:68.5px;top:525.2px;transform-origin:0 0;transform:scaleX(0.9588)">m</div>
<svg class="abs" style="left:55px;top:521px" width="16" height="10" viewBox="55 521 16 10"><path d="M57 528.5 H68.5" stroke="#444" stroke-width="1"/><path d="M66.5 524.5 V531" stroke="#555" stroke-width="1.2"/></svg>
<svg class="abs" style="left:774px;top:508px" width="15" height="23" viewBox="774 508 15 23"><path d="M777 520.5 L789 508.5 M781 520.5 L789 512.5 M785 520.5 L789 516.5 M779 531 L789 521 M783 531 L789 525" stroke="#b8b5a6" stroke-width="1"/><path d="M778 520.5 L789 509.5 M782 520.5 L789 513.5 M786 520.5 L789 517.5" stroke="#fff" stroke-width="0.7"/></svg>
</body>
</html>
